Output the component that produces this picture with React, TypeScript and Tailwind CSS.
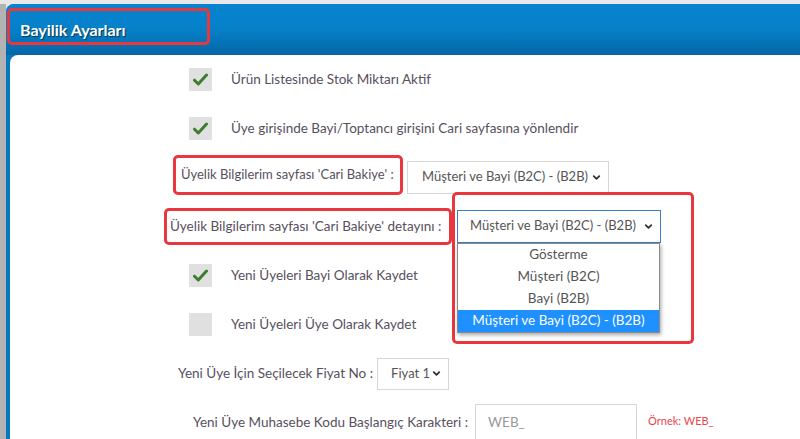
import * as React from "react";
import { ChevronDown } from "lucide-react";

const FONT = { fontFamily: "Lato, 'Open Sans', sans-serif" };

function Check({ checked }: { checked: boolean }) {
  return (
    <div className="w-[23px] h-[23px] bg-[#e0e0e0] flex items-center justify-center shrink-0">
      {checked && (
        <svg width="15" height="13" viewBox="0 0 15 13">
          <path d="M1.5 7.2 L5.3 11 L13.5 2" fill="none" stroke="#3f7d2e" strokeWidth="3" strokeLinecap="round" strokeLinejoin="round" />
        </svg>
      )}
    </div>
  );
}

function CheckRow({ checked, label }: { checked: boolean; label: string }) {
  return (
    <div className="h-[49px] flex items-center pl-[179px] gap-[19px]">
      <Check checked={checked} />
      <span className="text-[13.5px] text-[#57505e]">{label}</span>
    </div>
  );
}

const OPTIONS = ["Gösterme", "Müşteri (B2C)", "Bayi (B2B)", "Müşteri ve Bayi (B2C) - (B2B)"];

export default function App() {
  return (
    <div className="w-[800px] h-[439px] overflow-hidden bg-[#e8e8e8] flex flex-col" style={FONT}>
      <div className="h-[4px] shrink-0" />
      <div className="flex flex-1 min-h-0">
        <div className="w-[6px] bg-[#b3b3b3] shrink-0" />
        <div className="flex-1 flex flex-col bg-[#0678c0] rounded-tl-[8px] overflow-hidden">
          {/* Header */}
          <div className="h-[51px] shrink-0 bg-gradient-to-b from-[#0783cf] via-[#0680c9] to-[#0566a6]">
            <div className="ml-[1px] mt-[4px] h-[37px] w-[203px] border-[3px] border-[#e8383d] rounded-[5px] pl-[10px] pt-[7px] flex items-center">
              <span className="text-white font-bold text-[16px] [text-shadow:1px_1px_1px_rgba(0,0,0,0.55)]">
                Bayilik Ayarları
              </span>
            </div>
          </div>

          {/* Body */}
          <div className="flex-1 ml-[4px] bg-white rounded-tl-[8px] flex flex-col">
            <CheckRow checked label="Ürün Listesinde Stok Miktarı Aktif" />
            <CheckRow checked label="Üye girişinde Bayi/Toptancı girişini Cari sayfasına yönlendir" />

            <div className="h-[49px] flex items-center pl-[163px] gap-[4px]">
              <div className="w-[230px] h-[40px] -mt-[5px] border-[3px] border-[#e8383d] rounded-[5px] pl-[5px] flex items-center">
                <span className="text-[13px] text-[#57505e] whitespace-nowrap">Üyelik Bilgilerim sayfası 'Cari Bakiye' :</span>
              </div>
              <div className="w-[202px] h-[33px] -mt-[1px] border border-[#d6d6d6] bg-white flex items-center justify-between pl-[14px] pr-[6px]">
                <span className="text-[13px] text-[#555]">Müşteri ve Bayi (B2C) - (B2B)</span>
                <ChevronDown size={11} strokeWidth={4} className="text-[#333]" />
              </div>
            </div>

            <div className="h-[49px] flex items-center pl-[154px] gap-[5px]">
              <div className="w-[288px] h-[37px] border-[3px] border-[#e8383d] rounded-[5px] pl-[3px] flex items-center">
                <span className="text-[13.5px] text-[#57505e] whitespace-nowrap">Üyelik Bilgilerim sayfası 'Cari Bakiye' detayını :</span>
              </div>
              <div className="relative w-[204px] h-[33px] -mt-[1px]">
                <div className="absolute -left-[5px] -top-[18px] w-[242px] h-[152px] border-[3px] border-[#e8383d] rounded-[5px]" />
                <div className="relative w-full h-full border border-[#3b7fc4] bg-white flex items-center justify-between pl-[12px] pr-[6px]">
                  <span className="text-[13px] text-[#555]">Müşteri ve Bayi (B2C) - (B2B)</span>
                  <ChevronDown size={11} strokeWidth={4} className="text-[#333]" />
                </div>
                <div className="absolute left-0 top-full w-[203px] border border-[#8a8a8a] bg-white shadow-[1px_2px_4px_rgba(0,0,0,0.35)] z-10 flex flex-col">
                  {OPTIONS.map((o, i) => (
                    <div
                      key={o}
                      className={
                        i === 3
                          ? "h-[22px] flex items-center justify-center text-[13.5px] bg-[#1e90ff] text-white"
                          : "h-[22px] flex items-center justify-center text-[13.5px] text-[#555]"
                      }
                    >
                      {o}
                    </div>
                  ))}
                </div>
              </div>
            </div>

            <CheckRow checked label="Yeni Üyeleri Bayi Olarak Kaydet" />
            <CheckRow checked={false} label="Yeni Üyeleri Üye Olarak Kaydet" />

            <div className="h-[49px] flex items-center pl-[168px] gap-[4px]">
              <span className="text-[13.5px] text-[#57505e] whitespace-nowrap">Yeni Üye İçin Seçilecek Fiyat No :</span>
              <div className="w-[72px] h-[32px] border border-[#d6d6d6] bg-white flex items-center justify-between pl-[13px] pr-[6px]">
                <span className="text-[13px] text-[#555]">Fiyat 1</span>
                <ChevronDown size={11} strokeWidth={4} className="text-[#333]" />
              </div>
            </div>

            <div className="h-[49px] flex items-start pt-[6px] pl-[183px]">
              <span className="text-[13.5px] text-[#57505e] whitespace-nowrap mt-[8px]">Yeni Üye Muhasebe Kodu Başlangıç Karakteri :</span>
              <div className="ml-[7px] w-[162px] h-[36px] border border-[#d6d6d6] bg-white flex items-center pl-[12px]">
                <span className="text-[13.5px] text-[#999]">WEB_</span>
              </div>
              <span className="ml-[11px] mt-[9px] text-[11px] text-[#e8474c]">Örnek: WEB_</span>
            </div>
          </div>
        </div>
      </div>
    </div>
  );
}
